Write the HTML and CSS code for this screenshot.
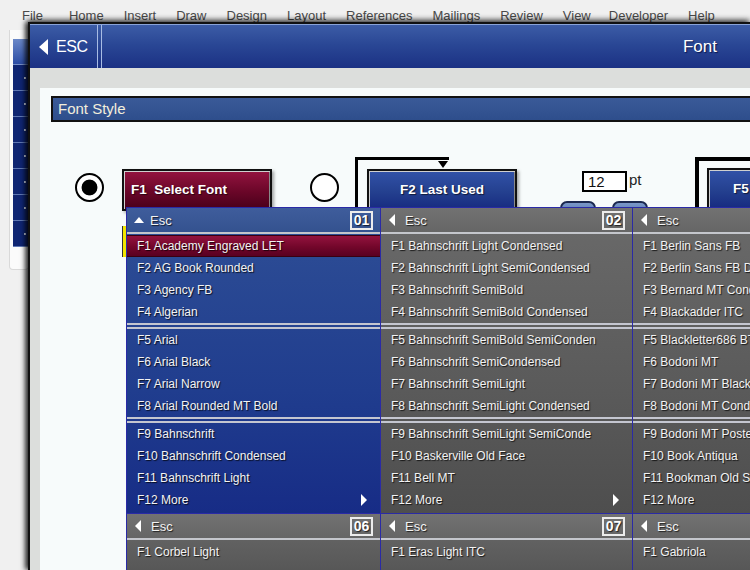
FILE: index.html
```html
<!DOCTYPE html>
<html>
<head>
<meta charset="utf-8">
<title>Font</title>
<link rel="stylesheet" href="styles.css">
</head>
<body>
<div class="app">
  <nav class="menubar">
    <span class="mi mi-file">File</span><span class="mi">Home</span><span class="mi">Insert</span><span class="mi">Draw</span><span class="mi">Design</span><span class="mi">Layout</span><span class="mi">References</span><span class="mi">Mailings</span><span class="mi">Review</span><span class="mi">View</span><span class="mi mi-dev">Developer</span><span class="mi">Help</span>
  </nav>
  <aside class="sidepanel">
    <div class="ribbon">
      <div class="rib-top"></div>
      <div class="rib-cell"></div><div class="rib-cell"></div><div class="rib-cell"></div><div class="rib-cell"></div><div class="rib-cell"></div><div class="rib-cell"></div><div class="rib-cell"></div>
    </div>
  </aside>
</div>

<section class="dialog">
  <header class="dlg-head">
    <div class="esc-btn"><span class="tri-left-big"></span><span class="esc-label">ESC</span></div>
    <div class="esc-div"></div>
    <div class="dlg-title">Font</div>
  </header>
  <div class="dlg-body">
    <div class="sheet">
      <div class="sec-title">Font Style</div>
      <div class="controls">
        <span class="radio checked"></span>
        <div class="fbtn fbtn-red">F1&nbsp;&nbsp;Select Font</div>
        <span class="radio radio-2"></span>
        <div class="bracket bracket-f2"><div class="fbtn fbtn-blue fbtn-center">F2 Last Used</div></div>
        <div class="size">
          <div class="size-row"><span class="size-input">12</span><span class="pt">pt</span></div>
          <div class="spin-row"><span class="spin"></span><span class="spin"></span></div>
        </div>
        <div class="bracket bracket-f5"><div class="fbtn fbtn-blue fbtn-f5">F5</div></div>
      </div>
    </div>
  </div>
</section>

<span class="focus-mark"></span>

<div class="dropdown">
  <div class="panel blue">
    <div class="phead"><span class="tri-up"></span><span class="esc">Esc</span><span class="num">01</span></div>
    <div class="group">
      <div class="item hl">F1 Academy Engraved LET</div>
      <div class="item">F2 AG Book Rounded</div>
      <div class="item">F3 Agency FB</div>
      <div class="item">F4 Algerian</div>
    </div>
    <div class="sep"></div>
    <div class="group">
      <div class="item">F5 Arial</div>
      <div class="item">F6 Arial Black</div>
      <div class="item">F7 Arial Narrow</div>
      <div class="item">F8 Arial Rounded MT Bold</div>
    </div>
    <div class="sep"></div>
    <div class="group">
      <div class="item">F9 Bahnschrift</div>
      <div class="item">F10 Bahnschrift Condensed</div>
      <div class="item">F11 Bahnschrift Light</div>
      <div class="item more">F12 More<span class="tri-right"></span></div>
    </div>
  </div>

  <div class="panel gray">
    <div class="phead"><span class="tri-left"></span><span class="esc">Esc</span><span class="num">02</span></div>
    <div class="group">
      <div class="item">F1 Bahnschrift Light Condensed</div>
      <div class="item">F2 Bahnschrift Light SemiCondensed</div>
      <div class="item">F3 Bahnschrift SemiBold</div>
      <div class="item">F4 Bahnschrift SemiBold Condensed</div>
    </div>
    <div class="sep"></div>
    <div class="group">
      <div class="item">F5 Bahnschrift SemiBold SemiConden</div>
      <div class="item">F6 Bahnschrift SemiCondensed</div>
      <div class="item">F7 Bahnschrift SemiLight</div>
      <div class="item">F8 Bahnschrift SemiLight Condensed</div>
    </div>
    <div class="sep"></div>
    <div class="group">
      <div class="item">F9 Bahnschrift SemiLight SemiConde</div>
      <div class="item">F10 Baskerville Old Face</div>
      <div class="item">F11 Bell MT</div>
      <div class="item more">F12 More<span class="tri-right"></span></div>
    </div>
  </div>

  <div class="panel gray">
    <div class="phead"><span class="tri-left"></span><span class="esc">Esc</span><span class="num">03</span></div>
    <div class="group">
      <div class="item">F1 Berlin Sans FB</div>
      <div class="item">F2 Berlin Sans FB Demi</div>
      <div class="item">F3 Bernard MT Condensed</div>
      <div class="item">F4 Blackadder ITC</div>
    </div>
    <div class="sep"></div>
    <div class="group">
      <div class="item">F5 Blackletter686 BT</div>
      <div class="item">F6 Bodoni MT</div>
      <div class="item">F7 Bodoni MT Black</div>
      <div class="item">F8 Bodoni MT Condensed</div>
    </div>
    <div class="sep"></div>
    <div class="group">
      <div class="item">F9 Bodoni MT Poster Compressed</div>
      <div class="item">F10 Book Antiqua</div>
      <div class="item">F11 Bookman Old Style</div>
      <div class="item more">F12 More<span class="tri-right"></span></div>
    </div>
  </div>

  <div class="panel gray">
    <div class="phead"><span class="tri-left"></span><span class="esc">Esc</span><span class="num">06</span></div>
    <div class="group">
      <div class="item">F1 Corbel Light</div>
    </div>
  </div>
  <div class="panel gray">
    <div class="phead"><span class="tri-left"></span><span class="esc">Esc</span><span class="num">07</span></div>
    <div class="group">
      <div class="item">F1 Eras Light ITC</div>
    </div>
  </div>
  <div class="panel gray">
    <div class="phead"><span class="tri-left"></span><span class="esc">Esc</span><span class="num">08</span></div>
    <div class="group">
      <div class="item">F1 Gabriola</div>
    </div>
  </div>
</div>
</body>
</html>
```

FILE: styles.css
```css
* { box-sizing: border-box; }

html, body {
  margin: 0;
  padding: 0;
  width: 750px;
  height: 570px;
  overflow: hidden;
  background: #f0f0f0;
  font-family: "Liberation Sans", Arial, sans-serif;
}

body { position: relative; }

/* ---------- background application ---------- */
.menubar {
  display: flex;
  gap: 20px;
  height: 30px;
  padding: 8px 0 0 22px;
  font-size: 13px;
  line-height: 16px;
  color: #4a4a4a;
}
.mi-file { margin-right: 6px; }
.mi-dev { margin-left: -2px; }

.sidepanel {
  margin-left: 9px;
  width: 20px;
  height: 240px;
  background: #fbfbfb;
  border: 1px solid #d9d9d9;
  border-top: none;
  border-radius: 0 0 4px 4px;
  padding: 9px 0 0 3px;
}
.ribbon {
  width: 16px;
  display: flex;
  flex-direction: column;
}
.rib-top {
  height: 26px;
  background: linear-gradient(#6a88c8, #2c4ca4);
  border-bottom: 1px solid #7890c8;
}
.rib-cell {
  height: 26px;
  background: #0f2572;
  border-bottom: 1px solid #6078b4;
  position: relative;
}
.rib-cell::after {
  content: "";
  position: absolute;
  right: 3px;
  top: 12px;
  width: 2px;
  height: 2px;
  background: #c8d0e8;
}

/* ---------- dialog window ---------- */
.dialog {
  position: absolute;
  left: 28px;
  top: 22px;
  right: 0;
  bottom: 0;
  background: #dcdedc;
  border-left: 2px solid #111;
  border-top: 2px solid #111;
  box-shadow: -3px 0 5px rgba(0, 0, 0, 0.75), 0 -3px 5px rgba(0, 0, 0, 0.45);
  display: flex;
  flex-direction: column;
}

.dlg-head {
  height: 44px;
  display: flex;
  align-items: stretch;
  border-top: 1px solid #8aa4d8;
  background: linear-gradient(#3c5ca6, #2a4795 45%, #1b3184);
  color: #fff;
}
.esc-btn {
  width: 67px;
  display: flex;
  align-items: center;
  padding-left: 9px;
}
.tri-left-big {
  width: 0;
  height: 0;
  border-top: 8px solid transparent;
  border-bottom: 8px solid transparent;
  border-right: 9px solid #fff;
  margin-right: 8px;
}
.esc-label {
  font-size: 16px;
  letter-spacing: -0.4px;
}
.esc-div {
  width: 5px;
  border-left: 1px solid #a8bce4;
  border-right: 1px solid #a8bce4;
}
.dlg-title {
  margin-left: auto;
  margin-right: 33px;
  align-self: center;
  font-size: 17px;
  text-shadow: 1px 1px 1px #0a1850;
}

.dlg-body {
  flex: 1;
  padding: 20px 0 0 10px;
  display: flex;
}
.sheet {
  flex: 1;
  background: #f7fbfb;
  padding: 8px 0 0 11px;
}
.sec-title {
  height: 26px;
  border: 2px solid #111;
  border-right: none;
  background: linear-gradient(#3a5a98, #2e4e8c);
  color: #f2eedc;
  font-size: 15px;
  line-height: 22px;
  padding-left: 5px;
}

/* ---------- controls ---------- */
.controls {
  display: flex;
  align-items: flex-start;
  margin-top: 35px;
}
.radio {
  width: 29px;
  height: 29px;
  border: 2.5px solid #000;
  border-radius: 50%;
  background: #fff;
  margin-top: 16px;
  flex: none;
}
.radio.checked {
  margin-left: 24px;
  background: radial-gradient(circle, #000 0 7.5px, #fff 8.3px);
}
.radio-2 { margin-left: 38px; }

.fbtn {
  width: 150px;
  height: 42px;
  border: 2px solid #111;
  box-shadow: inset 1px 1px 0 #d0d0d0, inset -1px 0 0 #8a8a8a, 2px 2px 3px rgba(0,0,0,0.35);
  color: #fff;
  font-weight: bold;
  font-size: 13.5px;
  line-height: 37px;
  text-shadow: 1px 1px 1px rgba(0,0,0,0.6);
  flex: none;
}
.fbtn-red {
  margin-left: 18px;
  margin-top: 12px;
  padding-left: 7px;
  background: linear-gradient(#941440, #6a0628 55%, #48001a);
}
.fbtn-blue {
  background: linear-gradient(#3252a8, #24408f 55%, #172b80);
}
.fbtn-center { text-align: center; }
.fbtn-f5 { padding-left: 24px; }

.bracket {
  position: relative;
  padding: 12px 0 0 12px;
  flex: none;
}
.bracket::before {
  content: "";
  position: absolute;
  left: 0;
  top: 0;
  width: 91px;
  height: 60px;
  border-top: 3.5px solid #000;
  border-left: 3.5px solid #000;
}
.bracket-f2 { margin-left: 16px; }
.bracket-f2::after {
  content: "";
  position: absolute;
  left: 83px;
  top: 4px;
  width: 0;
  height: 0;
  border-left: 5px solid transparent;
  border-right: 5px solid transparent;
  border-top: 7px solid #000;
}
.bracket-f5 {
  margin-left: 47px;
  padding-top: 11px;
}
.bracket-f5::before { width: 200px; border-width: 4px; }

.size {
  margin-left: 43px;
  margin-top: 14px;
  width: 88px;
  flex: none;
}
.size-row {
  display: flex;
  padding-left: 22px;
}
.size-input {
  width: 45px;
  height: 21px;
  border: 2px solid #000;
  background: #fff;
  font-size: 15px;
  line-height: 17px;
  padding-left: 4px;
  color: #111;
}
.pt {
  margin-left: 2px;
  font-size: 15px;
  line-height: 17px;
  color: #222;
}
.spin-row {
  display: flex;
  gap: 16px;
  margin-top: 9px;
}
.spin {
  width: 36px;
  height: 20px;
  background: linear-gradient(#7a98c8, #4a6aa8);
  border: 2px solid #1a2850;
  border-radius: 7px 7px 0 0;
}

.focus-mark {
  position: absolute;
  left: 122px;
  top: 226px;
  width: 5px;
  height: 31px;
  background: #f2e600;
  border-left: 1px solid #333;
}

/* ---------- dropdown menus ---------- */
.dropdown {
  position: absolute;
  left: 126px;
  top: 207px;
  display: grid;
  grid-template-columns: 253px 251px 252px;
  grid-template-rows: 305px 80px;
  gap: 1px;
  padding: 1px;
  background: #2a2aa6;
}
.panel {
  display: flex;
  flex-direction: column;
  overflow: hidden;
  color: #f3f3f3;
}
.panel.blue { background: linear-gradient(#2f4f96, #203d8e 60%, #172c86); }
.panel.gray { background: linear-gradient(#6a6a6a, #5a5a5a 60%, #4e4e4e); }

.phead {
  height: 26px;
  flex: none;
  display: flex;
  align-items: center;
  padding-left: 8px;
  border-bottom: 2px solid #c4c6cc;
  font-size: 13px;
  text-shadow: 1px 1px 1px rgba(0,0,0,0.7);
}
.blue .phead { background: linear-gradient(#3f5d9c, #34528f); padding-left: 7px; }
.gray .phead { background: linear-gradient(#727272, #666); }

.tri-up {
  width: 0;
  height: 0;
  border-left: 5.5px solid transparent;
  border-right: 5.5px solid transparent;
  border-bottom: 6px solid #fff;
  margin-right: 6px;
}
.tri-left {
  width: 0;
  height: 0;
  border-top: 6px solid transparent;
  border-bottom: 6px solid transparent;
  border-right: 6px solid #fff;
  margin-right: 10px;
}
.num {
  margin-left: auto;
  margin-right: 7px;
  width: 23px;
  height: 19px;
  border: 2px solid #ececec;
  font-weight: bold;
  font-size: 14px;
  line-height: 15px;
  text-align: center;
  color: #fff;
}

.group { padding-top: 1px; }
.sep {
  height: 6px;
  border-top: 2px solid #c4c6d0;
  border-bottom: 2px solid #c4c6d0;
}
.sep + .group { padding-top: 0; }

.item {
  height: 22px;
  line-height: 23px;
  padding-left: 10px;
  font-size: 12px;
  white-space: nowrap;
  text-shadow: 1px 1px 1px rgba(0,0,0,0.75);
}
.item.hl {
  background: linear-gradient(#961440, #72062a 55%, #560020);
  box-shadow: inset 0 1px 0 #3a0010, inset 0 -1px 0 #3a0010;
}
.item.more {
  display: flex;
  align-items: center;
}
.tri-right {
  margin-left: auto;
  margin-right: 13px;
  width: 0;
  height: 0;
  border-top: 6px solid transparent;
  border-bottom: 6px solid transparent;
  border-left: 6px solid #fff;
}
```
